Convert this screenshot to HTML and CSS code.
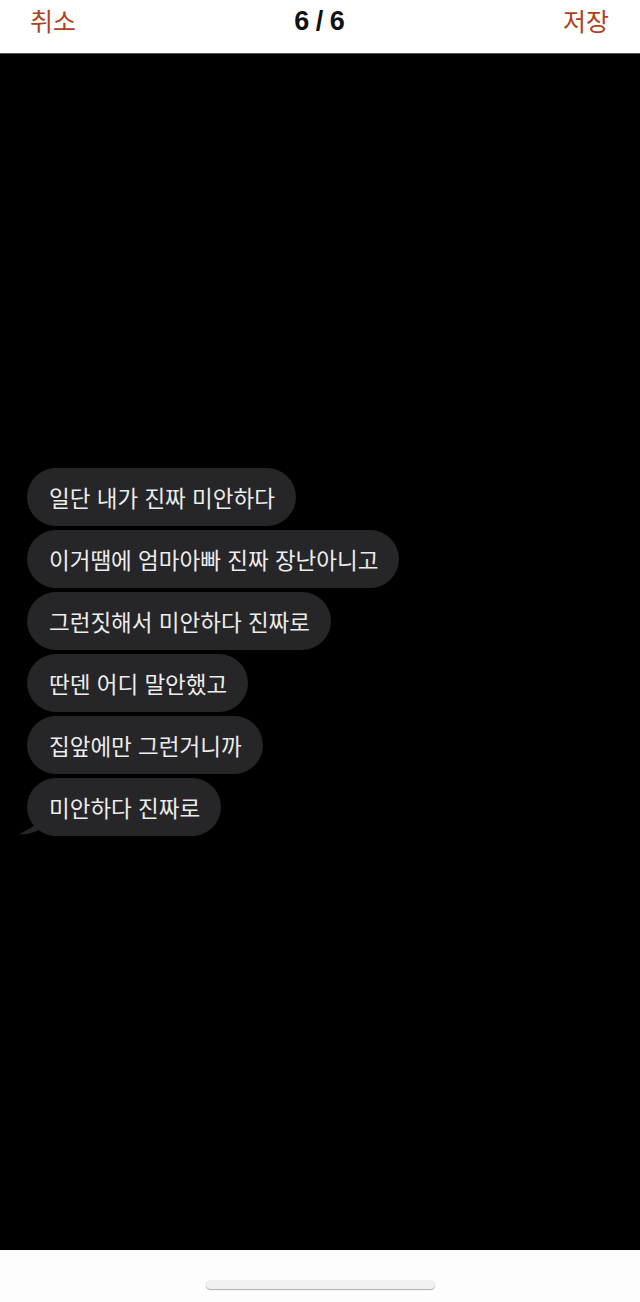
FILE: index.html
```html
<!DOCTYPE html>
<html lang="ko">
<head>
<meta charset="utf-8">
<link rel="stylesheet" href="styles.css">
</head>
<body>
<div class="screen">
  <header class="topbar">
    <span class="action">취소</span>
    <span class="title">6 / 6</span>
    <span class="action">저장</span>
  </header>
  <main class="photo">
    <div class="thread">
      <div class="bubble">일단 내가 진짜 미안하다</div>
      <div class="bubble">이거땜에 엄마아빠 진짜 장난아니고</div>
      <div class="bubble">그런짓해서 미안하다 진짜로</div>
      <div class="bubble">딴덴 어디 말안했고</div>
      <div class="bubble">집앞에만 그런거니까</div>
      <div class="bubble last">미안하다 진짜로
        <svg class="tail" width="26" height="26" viewBox="0 0 26 26"><path d="M26 0 C 24 10 18 18 1 25 C 10 26 19 23 26 17 Z" fill="#262528"/></svg>
      </div>
    </div>
  </main>
  <footer class="bottombar"><div class="homebar"></div></footer>
</div>
</body>
</html>
```
FILE: styles.css
```css
html, body { margin: 0; padding: 0; }
body { width: 640px; height: 1302px; overflow: hidden; background: #fff; font-family: "Noto Sans CJK KR", "Noto Sans", sans-serif; }
.screen { display: flex; flex-direction: column; height: 1302px; }
.topbar { height: 54px; flex: none; display: flex; justify-content: space-between; align-items: flex-start; padding: 3px 31px 0 30px; box-sizing: border-box; background: #fff; border-bottom: 1px solid #555; }
.action { font-size: 25px; color: #b2401c; line-height: 34px; }
.title { font-family: "Liberation Sans", Arial, sans-serif; font-weight: bold; font-size: 27px; line-height: 36px; color: #111; word-spacing: -1px; margin-left: 0; }
.photo { flex: 1; background: #000; padding-top: 414px; box-sizing: border-box; }
.thread { display: flex; flex-direction: column; align-items: flex-start; gap: 4px; padding-left: 27px; }
.bubble { position: relative; height: 58px; box-sizing: border-box; padding: 0 21px 0 22px; border-radius: 29px; background: #262528; color: #ededed; font-size: 22.5px; line-height: 58px; white-space: nowrap; }
.tail { position: absolute; left: -9px; bottom: 1px; }
.bottombar { height: 52px; flex: none; background: #fdfdfd; display: flex; justify-content: center; padding-top: 30px; box-sizing: border-box; }
.homebar { width: 229px; height: 9px; border-radius: 5px; background: #f0f0f0; box-shadow: 0 1px 1px #aaa; }
```
